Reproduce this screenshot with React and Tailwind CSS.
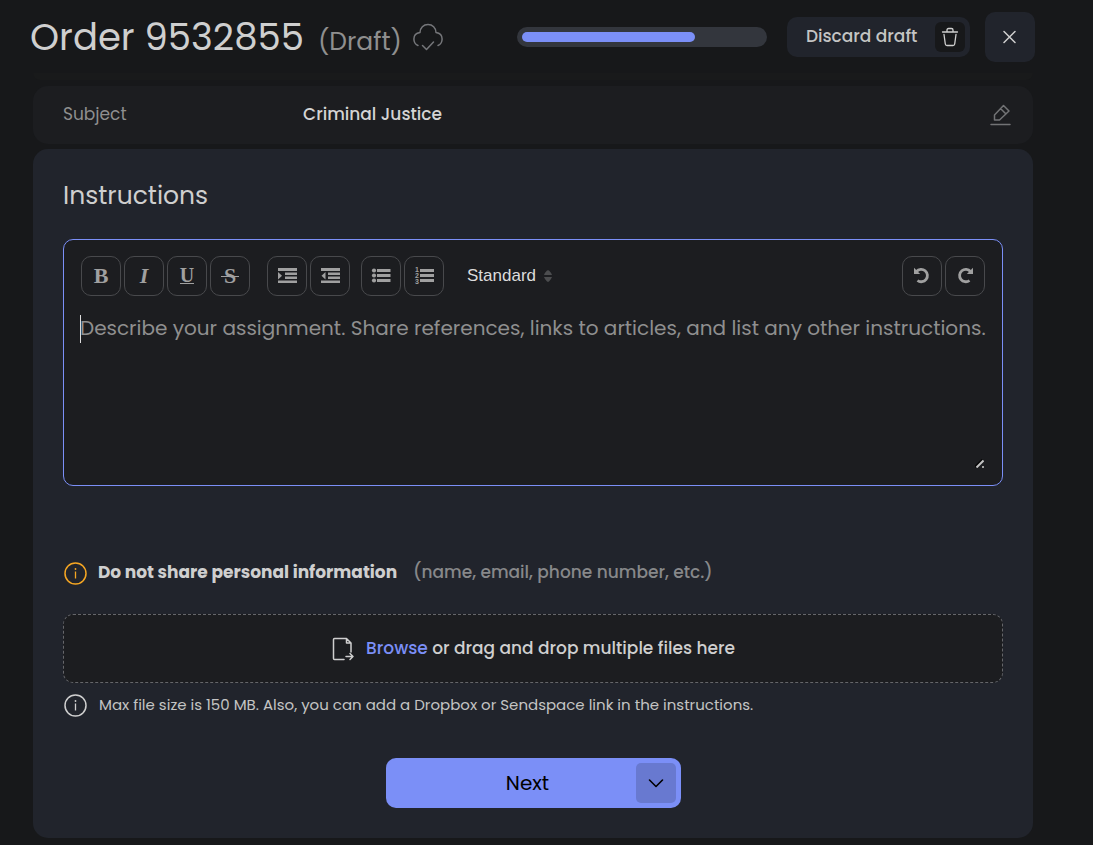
import { useState } from "react";

const GLYPH = "font-['Liberation_Serif',serif] text-[22px] leading-none font-bold";

export default function App() {
  const [text, setText] = useState("");
  const [style, setStyle] = useState("standard");
  const progress = 72;

  return (
    <div className="min-h-screen bg-[#17181a] font-['Poppins',sans-serif] text-[#cfcfcf]">
      <header className="flex h-[62px] items-center pt-3 pl-[30px] pr-[58px]">
        <h1 className="flex items-baseline text-[37px] leading-[50px] whitespace-nowrap">
          Order 9532855
          <span className="ml-[14px] text-[25px] leading-none text-[#8f8f8f]">(Draft)</span>
        </h1>
        <CloudIcon />

        <div
          role="progressbar"
          aria-label="Order progress"
          aria-valuenow={progress}
          className="ml-auto h-5 w-[250px] rounded-full bg-[#33363d] p-[5px]"
        >
          <div className="h-full rounded-full bg-[#7b8ff7]" style={{ width: `${progress}%` }} />
        </div>

        <button className="ml-5 flex h-10 w-[183px] items-center justify-between rounded-[10px] bg-[#21242c] pr-[5px] pl-[19px] text-[17px] font-medium text-[#c4c4c4]">
          Discard draft
          <span className="flex h-[30px] w-[30px] items-center justify-center rounded-md bg-[#17181a]">
            <TrashIcon />
          </span>
        </button>
        <button
          aria-label="Close"
          className="ml-[15px] flex h-[50px] w-[50px] items-center justify-center rounded-[10px] bg-[#21242c]"
        >
          <svg width="14" height="14" viewBox="0 0 14 14" stroke="#cfcfcf" strokeWidth="1.5" strokeLinecap="round">
            <path d="M1 1.5 L12 12.5 M12 1.5 L1 12.5" />
          </svg>
        </button>
      </header>

      <main className="pr-[60px] pb-[7px] pl-[33px]">
        <div className="mt-[11px] mb-[6px] h-[7px] rounded-b-[15px] bg-[#191a1b]" />

        <section className="flex h-[58px] items-center rounded-[15px] bg-[#1c1d20] pr-[21px] pl-[30px] text-[17px] font-medium">
          <span className="w-[240px] font-normal text-[#8f8f8f]">Subject</span>
          <span className="text-[#d4d4d4]">Criminal Justice</span>
          <button aria-label="Edit subject" className="ml-auto">
            <PencilIcon />
          </button>
        </section>

        <section className="mt-[5px] rounded-[15px] bg-[#21242c] px-[30px] pt-[27px] pb-[30px]">
          <h2 className="text-[25px] leading-10">Instructions</h2>

          <div className="mt-[23px] rounded-[10px] border border-[#7b8ff7] bg-[#1c1d20] px-4 pt-4 pb-[15px]">
            <div className="flex items-center px-px">
              <div className="flex gap-[3px]">
                <ToolButton label="Bold">
                  <span className={GLYPH}>B</span>
                </ToolButton>
                <ToolButton label="Italic">
                  <span className={`${GLYPH} italic`}>I</span>
                </ToolButton>
                <ToolButton label="Underline">
                  <span className="flex flex-col items-center border-b border-current font-['Liberation_Serif',serif] text-[20px] leading-[15px] font-bold">
                    U
                  </span>
                </ToolButton>
                <ToolButton label="Strikethrough">
                  <span className={`${GLYPH} relative`}>
                    S
                    <span className="absolute top-1/2 -left-[3px] h-px w-[18px] bg-current" />
                  </span>
                </ToolButton>
              </div>
              <div className="ml-[17px] flex gap-[3px]">
                <ToolButton label="Indent">
                  <IndentIcon />
                </ToolButton>
                <ToolButton label="Outdent">
                  <IndentIcon outdent />
                </ToolButton>
              </div>
              <div className="ml-[11px] flex gap-[3px]">
                <ToolButton label="Bulleted list">
                  <BulletIcon />
                </ToolButton>
                <ToolButton label="Numbered list">
                  <NumberedIcon />
                </ToolButton>
              </div>

              <div className="relative ml-[23px]">
                <select
                  aria-label="Text style"
                  value={style}
                  onChange={(e) => setStyle(e.target.value)}
                  className="block w-[85px] appearance-none bg-transparent font-['Liberation_Sans',sans-serif] text-[17px] text-[#dcdcdc]"
                >
                  <option value="standard">Standard</option>
                  <option value="heading">Heading</option>
                </select>
                <svg
                  className="pointer-events-none absolute top-1/2 right-0 -translate-y-1/2"
                  width="8"
                  height="12"
                  viewBox="0 0 8 12"
                  fill="#4c4d4f"
                >
                  <path d="M0 5 Q.6 3 3 .6 Q4 -.2 5 .6 Q7.4 3 8 5z M0 7 Q.6 9 3 11.4 Q4 12.2 5 11.4 Q7.4 9 8 7z" />
                </svg>
              </div>

              <div className="ml-auto flex gap-[3px]">
                <ToolButton label="Undo">
                  <UndoIcon />
                </ToolButton>
                <ToolButton label="Redo">
                  <UndoIcon className="-scale-x-100" />
                </ToolButton>
              </div>
            </div>

            <div className="relative mt-[17px]">
              <textarea
                aria-label="Instructions"
                value={text}
                onChange={(e) => setText(e.target.value)}
                placeholder="Describe your assignment. Share references, links to articles, and list any other instructions."
                className="block h-[157px] w-full resize-none bg-transparent text-[20px] leading-[30px] outline-none placeholder:text-[#8f8f8f]"
              />
              <span className="absolute top-[2px] left-0 h-7 w-px bg-[#dcdcdc]" />
              <svg className="absolute right-[2px] bottom-[2px]" width="9" height="9" viewBox="0 0 9 9">
                <path d="M0 8 L7.5 .5" stroke="#060606" strokeWidth="2" />
                <path d="M1.5 8.5 L8.5 1.5" stroke="#c4c4c4" strokeWidth="2" />
                <path d="M7 7h2v2h-2z" fill="#a0a0a0" />
              </svg>
            </div>
          </div>

          <p className="mt-[75px] flex h-6 items-center text-[17px] whitespace-nowrap">
            <InfoIcon className="text-[#f5a623]" />
            <strong className="ml-[11px] font-bold text-[#cfcfcf]">Do not share personal information</strong>
            <span className="ml-4 font-medium text-[#87888a]">(name, email, phone number, etc.)</span>
          </p>

          <label className="mt-[29px] flex h-[69px] cursor-pointer items-center justify-center rounded-[10px] border border-dashed border-[#65666a] bg-[#1c1d20] text-[17px] font-medium text-[#cfcfcf]">
            <input type="file" multiple className="sr-only" />
            <FileIcon />
            <span className="ml-[11px]">
              <span className="text-[#7b8ff7]">Browse</span> or drag and drop multiple files here
            </span>
          </label>

          <p className="mt-[10px] flex h-6 items-center text-[15px] text-[#c4c4c4]">
            <InfoIcon className="text-[#cfcfcf]" />
            <span className="ml-3">
              Max file size is 150 MB. Also, you can add a Dropbox or Sendspace link in the instructions.
            </span>
          </p>

          <div className="mx-auto mt-[41px] flex h-[50px] w-[295px] items-center rounded-[10px] bg-[#7b8ff7] pr-[5px] text-black">
            <button className="h-full flex-1 pl-[34px] text-[20px]">Next</button>
            <button
              aria-label="More options"
              className="flex h-10 w-10 items-center justify-center rounded-[5px] bg-[#6879d0]"
            >
              <svg width="16" height="10" viewBox="0 0 16 10" fill="none" stroke="black" strokeWidth="1.6" strokeLinecap="round" strokeLinejoin="round">
                <path d="M1.5 2 L8 8.5 L14.5 2" />
              </svg>
            </button>
          </div>
        </section>
      </main>
    </div>
  );
}

function ToolButton({ label, children }) {
  return (
    <button
      aria-label={label}
      className="flex h-10 w-10 items-center justify-center rounded-[10px] border border-[#48494c] text-[#a0a0a0]"
    >
      {children}
    </button>
  );
}

function CloudIcon() {
  return (
    <svg className="ml-[11px] shrink-0" width="30" height="28" viewBox="0 0 30 28" fill="none" stroke="#75767a" strokeWidth="1.5" strokeLinecap="round" strokeLinejoin="round">
      <path d="M5 22.5 C2.5 21.5 .9 19 .9 16 C.9 12.5 3.5 10 7 9.5 C7.2 4.8 10.4 1.5 15 1.5 C19.6 1.5 22.8 4.8 23 9.5 C26.5 10 29.1 12.5 29.1 16 C29.1 19.5 27.5 21.5 25 22.5" />
      <path d="M9.5 22.5 L13.5 26.5 L20.5 19" />
    </svg>
  );
}

function TrashIcon() {
  return (
    <svg width="18" height="20" viewBox="0 0 18 20" fill="none" stroke="#cfcfcf" strokeWidth="1.3" strokeLinecap="round" strokeLinejoin="round">
      <path d="M1.5 5 H16.5 M6 5 V3 Q6 1.5 7.5 1.5 H10.5 Q12 1.5 12 3 V5 M3 7.5 L4.3 17 Q4.5 18.5 6 18.5 H12 Q13.5 18.5 13.7 17 L15 7.5" />
    </svg>
  );
}

function PencilIcon() {
  return (
    <svg width="22" height="22" viewBox="0 0 22 22" fill="none" stroke="#727375" strokeWidth="1.5" strokeLinecap="round" strokeLinejoin="round">
      <path d="M1 20.5 H20" />
      <path d="M4.5 16 V11 L13.5 1.5 L19 7 L9.5 16 Z M10.5 4.5 L16 10" />
    </svg>
  );
}

function IndentIcon({ outdent }) {
  return (
    <svg width="20" height="16" viewBox="0 0 20 16" fill="currentColor">
      <path d="M1 0h19v3h-19z M8 4.5h12v2.500h-12z M8 8.500h12v2.500h-12z M1 12.500h19v2.500h-19z" />
      {outdent ? <path d="M5.5 4v7.500L1.500 7.700z" /> : <path d="M1 4v7.500L5 7.700z" />}
    </svg>
  );
}

function BulletIcon() {
  return (
    <svg width="20" height="16" viewBox="0 0 20 16" fill="currentColor">
      <path d="M6 1h13.5v3H6z M6 6h13.5v3H6z M6 11h13.5v3H6z" />
      <circle cx="3" cy="2.5" r="2.1" />
      <circle cx="3" cy="7.5" r="2.1" />
      <circle cx="3" cy="12.5" r="2.1" />
    </svg>
  );
}

function NumberedIcon() {
  return (
    <svg width="20" height="20" viewBox="0 0 20 20" fill="currentColor">
      <path d="M6 3h14v3H6z M6 8h14v3H6z M6 13h14v3H6z" />
      <g fontFamily="Liberation Sans" fontSize="7" fontWeight="bold">
        <text x="1" y="6">1</text>
        <text x="1" y="12">2</text>
        <text x="1" y="18">3</text>
      </g>
    </svg>
  );
}

function UndoIcon({ className }) {
  return (
    <svg className={className} width="18" height="18" viewBox="0 0 18 18" fill="none" stroke="currentColor" strokeWidth="2.8">
      <path d="M3.5 4.5 A6.2 6.2 0 1 1 4.5 13.5" />
      <path d="M1 .8 V7 H7.2z" fill="currentColor" stroke="none" />
    </svg>
  );
}

function InfoIcon({ className }) {
  return (
    <svg className={`shrink-0 ${className}`} width="24" height="24" viewBox="0 0 24 24" fill="none" stroke="currentColor" strokeWidth="1.5">
      <circle cx="12.5" cy="12.5" r="10.5" />
      <path d="M12.5 10.5 V17.5" strokeWidth="1.3" />
      <circle cx="12.5" cy="8" r=".9" fill="currentColor" stroke="none" />
    </svg>
  );
}

function FileIcon() {
  return (
    <svg width="24" height="24" viewBox="0 0 24 24" fill="none" stroke="#cfcfcf" strokeWidth="1.5" strokeLinecap="round" strokeLinejoin="round">
      <path d="M13 22.5 H3.5 Q2.5 22.5 2.5 21.5 V2.5 Q2.5 1.5 3.5 1.5 H15.5 L20 6 V15 M15.5 1.5 V6 H20" />
      <path d="M15 19.5 H22 M19 16.5 L22 19.5 L19 22.5" />
    </svg>
  );
}
